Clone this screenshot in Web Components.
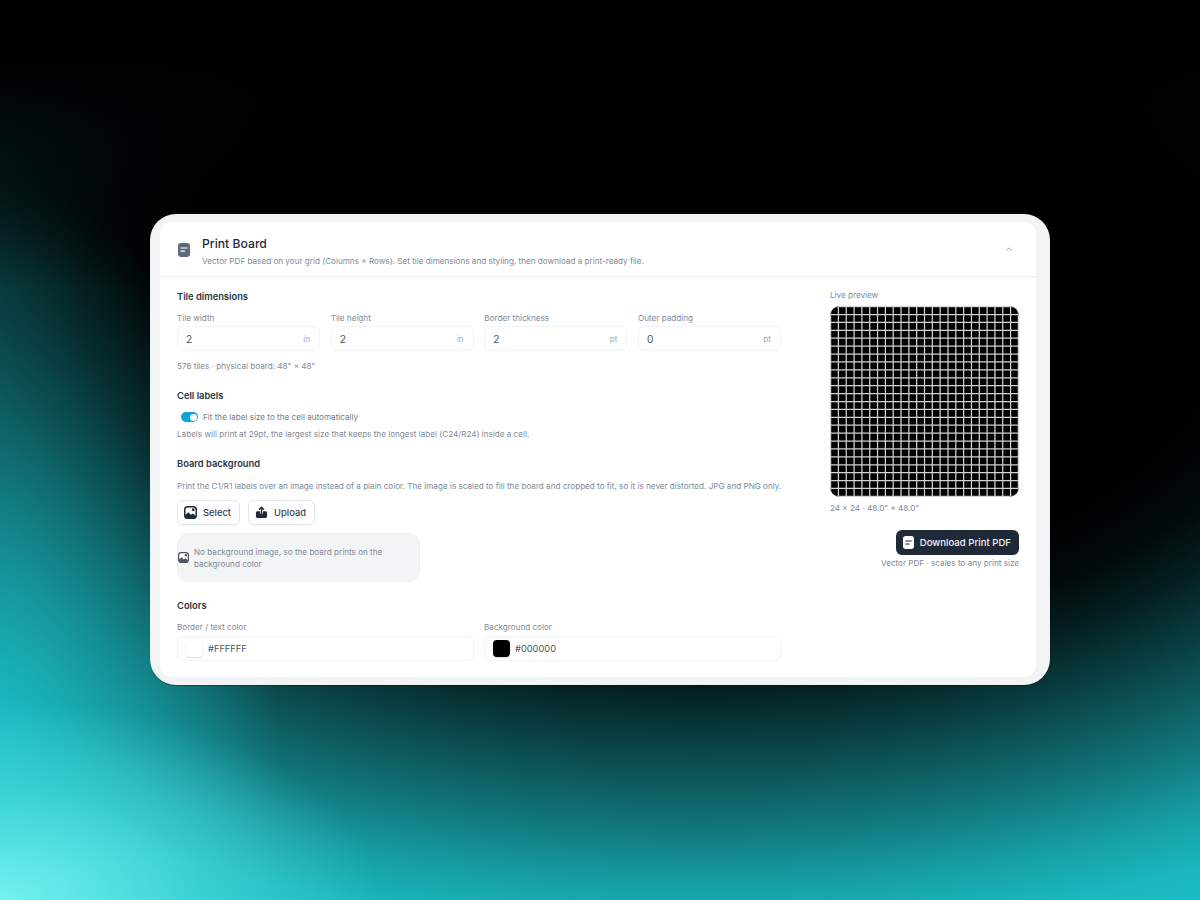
<!DOCTYPE html>
<html>
<head>
<meta charset="utf-8">
<style>
  html, body { margin: 0; height: 100%; }
  body {
    width: 1200px; height: 900px; overflow: hidden; box-sizing: border-box; padding: 214px 0 0 150px;
    font-family: Inter, "Liberation Sans", sans-serif;
    background:
      radial-gradient(380px 200px at 0 900px, rgba(125,246,242,.9), rgba(125,246,242,.3) 55%, rgba(125,246,242,0) 100%),
      linear-gradient(180deg, #000 60px, rgba(0,0,0,.9) 100px, rgba(0,0,0,.5) 200px, rgba(0,0,0,0) 290px),
      radial-gradient(280px 600px at 0 780px, rgba(28,196,204,.85), rgba(28,196,204,0) 100%),
      radial-gradient(1100px 620px at 700px 300px, #000 0%, #000 48%, rgba(0,0,0,.95) 56%, rgba(0,0,0,.84) 63%, rgba(0,0,0,.7) 70%, rgba(0,0,0,.54) 78%, rgba(0,0,0,.38) 86%, rgba(0,0,0,.2) 94%, rgba(0,0,0,.07) 102%, rgba(0,0,0,0) 112%),
      #1cc4cc;
  }
</style>
</head>
<body>
<template id="t-panel">
  <style>
    :host { display: block; width: 900px; height: 471px; box-sizing: border-box; padding: 8px 14px 8px 10px; background: #f1f3f5; border-radius: 26px; box-shadow: 0 1px 1px rgba(0,0,0,.35); }
    .card { height: 100%; box-sizing: border-box; background: #fff; border-radius: 12px; overflow: hidden; }
    .body { display: flex; justify-content: space-between; padding: 0 17px; }
    .left { width: 604px; padding-top: 13px; }
    .right { width: 189px; padding-top: 12px; }
  </style>
  <div class="card">
    <slot name="header"></slot>
    <div class="body">
      <div class="left"><slot></slot></div>
      <div class="right"><slot name="aside"></slot></div>
    </div>
  </div>
</template>

<template id="t-header">
  <style>
    :host { display: flex; align-items: center; height: 55px; box-sizing: border-box; padding: 4px 23px 0 18px; border-bottom: 1px solid #eceef1; }
    svg.doc { width: 12px; height: 14px; margin: -2px 12px 0 0; flex: none; }
    .text { flex: 1; }
    h1 { margin: 0; font-size: 12.2px; line-height: 16px; font-weight: 500; color: #1f2937; }
    p { margin: 3px 0 0; font-size: 8.15px; line-height: 12px; color: #808a97; }
    svg.chev { width: 8px; height: 6px; margin-top: -4px; }
  </style>
  <svg class="doc" viewBox="0 0 12 14"><rect width="12" height="14" rx="3" fill="#5f6b7c"/><path d="M3 5h6M3 8.2h3.6" stroke="#fff" stroke-width="1.2" stroke-linecap="round"/></svg>
  <div class="text"><h1><slot name="title"></slot></h1><p><slot name="sub"></slot></p></div>
  <svg class="chev" viewBox="0 0 9 6"><path d="M1.5 4.5 4.5 1.8 7.5 4.5" fill="none" stroke="#9aa3af" stroke-width="1.1" stroke-linecap="round" stroke-linejoin="round"/></svg>
</template>

<template id="t-section">
  <style>
    :host { display: block; }
    h2 { margin: 0; font-size: 9.35px; line-height: 14px; font-weight: 600; color: #2b3543; }
  </style>
  <h2><slot name="title"></slot></h2>
  <div><slot></slot></div>
</template>

<template id="t-field">
  <style>
    :host { display: block; }
    label { display: block; font-size: 8.15px; line-height: 12px; color: #808a97; margin-bottom: 2.5px; }
    .box { display: flex; align-items: center; height: 25px; box-sizing: border-box; padding: 0 9px 0 8px; border: 1px solid #f2f3f5; border-radius: 6px; background: #fff; }
    .val { flex: 1; font-size: 10.2px; color: #4b5563; }
    .unit { font-size: 8.15px; color: #a3abb6; }
  </style>
  <label><slot name="label"></slot></label>
  <div class="box"><span class="val"><slot></slot></span><span class="unit"><slot name="unit"></slot></span></div>
</template>

<template id="t-color">
  <style>
    :host { display: block; }
    label { display: block; font-size: 8.15px; line-height: 12px; color: #808a97; margin-bottom: 3px; }
    .box { display: flex; align-items: center; gap: 5px; height: 25px; box-sizing: border-box; padding: 0 8px; border: 1px solid #f2f3f5; border-radius: 6px; background: #fff; }
    .swatch { width: 17px; height: 17px; border-radius: 4px; background: var(--swatch, #fff); box-shadow: 0 1px 2px rgba(17,24,39,.16); }
    .val { font-size: 9.3px; color: #4b5563; }
  </style>
  <label><slot name="label"></slot></label>
  <div class="box"><span class="swatch"></span><span class="val"><slot></slot></span></div>
</template>

<template id="t-toggle">
  <style>
    :host { display: flex; align-items: center; gap: 5px; padding-left: 4px; height: 12px; font-size: 8.15px; color: #727d8a; }
    .track { position: relative; width: 17px; height: 10px; border-radius: 5px; background: #0ea5d9; }
    .knob { position: absolute; right: 1.5px; top: 1.5px; width: 7px; height: 7px; border-radius: 50%; background: #fff; }
  </style>
  <span class="track"><span class="knob"></span></span><slot></slot>
</template>

<template id="t-btn">
  <style>
    :host { display: inline-flex; align-items: center; gap: 6px; height: 25px; box-sizing: border-box; padding: 0 8px 0 6px; border: 1px solid #e3e5e9; border-radius: 6px; background: #fff; font-size: 9.4px; font-weight: 500; color: #374151; box-shadow: 0 1px 1px rgba(17,24,39,.03); }
    ::slotted(svg) { width: 13px; height: 13px; }
  </style>
  <slot name="icon"></slot><slot></slot>
</template>

<template id="t-empty">
  <style>
    :host { display: flex; align-items: center; gap: 5px; width: 243px; height: 49px; box-sizing: border-box; padding: 0 12px 0 0; background: #f3f4f6; border: 1px solid #eef0f2; border-radius: 12px; font-size: 8.15px; line-height: 12px; color: #808a97; }
    svg { width: 11px; height: 11px; flex: none; }
  </style>
  <svg viewBox="0 0 14 14"><rect x=".8" y=".8" width="12.4" height="12.4" rx="3.2" fill="#fff" stroke="#4b5563" stroke-width="1.6"/><path d="M1 10 4.6 6.6 7.4 9.4 9.6 8 13 11v.5a2 2 0 0 1-2 2H3a2 2 0 0 1-2-2Z" fill="#4b5563"/><circle cx="10" cy="4" r="1.5" fill="#4b5563"/></svg>
  <span><slot></slot></span>
</template>

<template id="t-preview">
  <style>
    :host { display: block; }
    .cap { font-size: 8.15px; line-height: 12px; color: #808a97; margin-bottom: 5px; }
    svg { display: block; width: 189px; height: 191px; border-radius: 10px; background: #000; }
    .meta { font-size: 8.15px; line-height: 12px; color: #808a97; margin-top: 5px; }
  </style>
  <div class="cap"><slot name="caption"></slot></div>
  <svg viewBox="0 0 189 191"><path fill="none" stroke="#d2d2d2" stroke-width="1.25"></path></svg>
  <div class="meta"><slot name="meta"></slot></div>
</template>

<template id="t-download">
  <style>
    :host { display: flex; flex-direction: column; align-items: flex-end; margin-top: 16px; }
    .b { display: flex; align-items: center; gap: 6px; height: 25px; box-sizing: border-box; padding: 0 8px 0 7px; background: #1f2937; color: #f3f4f6; border-radius: 6px; font-size: 9.6px; font-weight: 500; }
    svg { width: 11px; height: 13px; }
    .n { margin-top: 2px; font-size: 8.15px; line-height: 12px; color: #808a97; }
  </style>
  <div class="b"><svg viewBox="0 0 12 14"><rect width="12" height="14" rx="3" fill="#fff"/><path d="M3 5.4h6M3 8.6h3.6" stroke="#1f2937" stroke-width="1.2" stroke-linecap="round"/></svg><slot></slot></div>
  <div class="n"><slot name="note"></slot></div>
</template>

<template id="t-row">
  <style>
    :host { display: grid; grid-template-columns: repeat(var(--cols, 4), 1fr); column-gap: var(--gap, 10.67px); margin-top: 7.5px; }
  </style>
  <slot></slot>
</template>

<template id="t-note">
  <style>
    :host { display: block; font-size: 8.15px; line-height: 12px; color: #808a97; white-space: nowrap; }
  </style>
  <slot></slot>
</template>

<print-panel>
  <panel-header slot="header">
    <span slot="title">Print Board</span>
    <span slot="sub">Vector PDF based on your grid (Columns × Rows). Set tile dimensions and styling, then download a print-ready file.</span>
  </panel-header>

  <panel-section>
    <span slot="title">Tile dimensions</span>
    <field-row>
      <num-field><span slot="label">Tile width</span>2<span slot="unit">in</span></num-field>
      <num-field><span slot="label">Tile height</span>2<span slot="unit">in</span></num-field>
      <num-field><span slot="label">Border thickness</span>2<span slot="unit">pt</span></num-field>
      <num-field><span slot="label">Outer padding</span>0<span slot="unit">pt</span></num-field>
    </field-row>
    <hint-text style="margin-top:9px">576 tiles · physical board: 48" × 48"</hint-text>
  </panel-section>

  <panel-section style="margin-top:17px">
    <span slot="title">Cell labels</span>
    <switch-row style="margin-top:8px">Fit the label size to the cell automatically</switch-row>
    <hint-text style="margin-top:5px">Labels will print at 29pt, the largest size that keeps the longest label (C24/R24) inside a cell.</hint-text>
  </panel-section>

  <panel-section style="margin-top:17px">
    <span slot="title">Board background</span>
    <hint-text style="margin-top:9px">Print the C1/R1 labels over an image instead of a plain color. The image is scaled to fill the board and cropped to fit, so it is never distorted. JPG and PNG only.</hint-text>
    <div style="display:flex;gap:8px;margin-top:8px">
      <icon-button>
        <svg slot="icon" viewBox="0 0 14 14"><rect x=".8" y=".8" width="12.4" height="12.4" rx="3.2" fill="#fff" stroke="#1f2937" stroke-width="1.6"/><path d="M1 10 4.6 6.6 7.4 9.4 9.6 8 13 11v.5a2 2 0 0 1-2 2H3a2 2 0 0 1-2-2Z" fill="#1f2937"/><circle cx="10" cy="4" r="1.5" fill="#1f2937"/></svg>
        Select
      </icon-button>
      <icon-button>
        <svg slot="icon" viewBox="0 0 14 14"><rect x="1" y="5.6" width="12" height="7.4" rx="1.6" fill="#1f2937"/><path d="M7 5v3.4" stroke="#fff" stroke-width="3"/><path d="M7 8.4V1.6M4.8 3.6 7 1.4l2.2 2.2" fill="none" stroke="#1f2937" stroke-width="1.5" stroke-linecap="round" stroke-linejoin="round"/></svg>
        Upload
      </icon-button>
    </div>
    <empty-note style="margin-top:8px">No background image, so the board prints on the background color</empty-note>
  </panel-section>

  <panel-section style="margin-top:17px">
    <span slot="title">Colors</span>
    <field-row style="--cols:2;--gap:10px;margin-top:8px">
      <color-field><span slot="label">Border / text color</span>#FFFFFF</color-field>
      <color-field style="--swatch:#000"><span slot="label">Background color</span>#000000</color-field>
    </field-row>
  </panel-section>

  <div slot="aside">
    <live-preview>
      <span slot="caption">Live preview</span>
      <span slot="meta">24 × 24 · 48.0" × 48.0"</span>
    </live-preview>
    <download-action>Download Print PDF<span slot="note">Vector PDF · scales to any print size</span></download-action>
  </div>
</print-panel>

<script>
  // every element here just stamps its template into an open shadow root
  const define = (tag, id, setup) => {
    customElements.define(tag, class extends HTMLElement {
      constructor() {
        super();
        this.attachShadow({ mode: 'open' });
        this.shadowRoot.appendChild(document.getElementById(id).content.cloneNode(true));
        if (setup) setup(this.shadowRoot);
      }
    });
  };

  // 24 x 24 board, outer edge included
  const drawBoard = (root) => {
    let d = '';
    for (let i = 0; i <= 24; i++) {
      const x = (0.6 + i * 187.8 / 24).toFixed(2);
      const y = (0.6 + i * 189.8 / 24).toFixed(2);
      d += `M${x} 0V191M0 ${y}H189`;
    }
    root.querySelector('svg path').setAttribute('d', d);
  };

  define('print-panel', 't-panel');
  define('panel-header', 't-header');
  define('panel-section', 't-section');
  define('num-field', 't-field');
  define('color-field', 't-color');
  define('switch-row', 't-toggle');
  define('icon-button', 't-btn');
  define('empty-note', 't-empty');
  define('live-preview', 't-preview', drawBoard);
  define('download-action', 't-download');
  define('field-row', 't-row');
  define('hint-text', 't-note');
</script>
</body>
</html>
